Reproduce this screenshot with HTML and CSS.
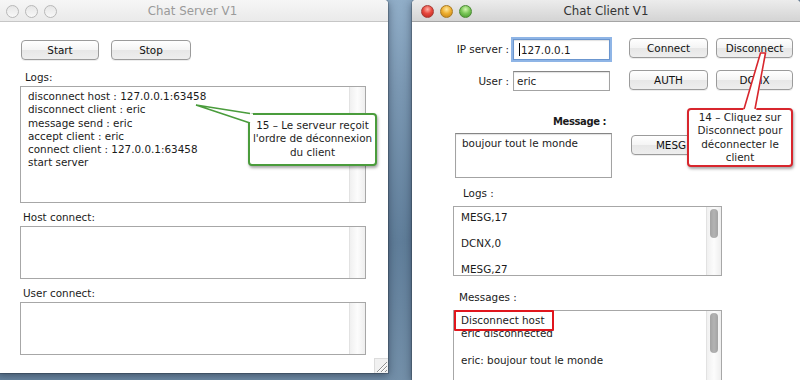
FILE: index.html
```html
<!DOCTYPE html>
<html lang="fr">
<head>
<meta charset="UTF-8">
<meta name="viewport" content="width=device-width, initial-scale=1.0">
<title>Chat Server V1 / Chat Client V1</title>
<link rel="stylesheet" href="styles.css">
</head>
<body>

<div class="window server inactive">
	<div class="titlebar">
		<div class="lights"><span></span><span></span><span></span></div>
		<div class="title">Chat Server V1</div>
	</div>
	<div class="content">
		<div class="buttons">
			<button class="btn start">Start</button>
			<button class="btn stop">Stop</button>
		</div>
		<div class="label first">Logs:</div>
		<div class="scroll logs">
			<div class="text">
				<div>disconnect host : 127.0.0.1:63458</div>
				<div>disconnect client : eric</div>
				<div>message send : eric</div>
				<div>accept client : eric</div>
				<div>connect client : 127.0.0.1:63458</div>
				<div>start server</div>
			</div>
			<div class="track"></div>
		</div>
		<div class="label">Host connect:</div>
		<div class="scroll small">
			<div class="text"></div>
			<div class="track"></div>
		</div>
		<div class="label">User connect:</div>
		<div class="scroll small">
			<div class="text"></div>
			<div class="track"></div>
		</div>
	</div>
	<svg class="grip" width="14" height="15" viewBox="0 0 14 15">
		<rect x="0.5" y="0.5" width="14" height="15" fill="#f1f1f1" stroke="#dcdcdc"/>
		<path d="M3 14 L13 4 M7 14 L13 8 M11 14 L13 12" stroke="#8f8f8f" stroke-width="1"/>
		<path d="M4 14 L13 5 M8 14 L13 9" stroke="#ffffff" stroke-width="1"/>
	</svg>
</div>

<div class="window client">
	<div class="titlebar">
		<div class="lights"><span class="red"></span><span class="yellow"></span><span class="green"></span></div>
		<div class="title">Chat Client V1</div>
	</div>
	<div class="content">
		<div class="connect-form">
			<label>IP server :</label>
			<div class="field focus"><span class="caret"></span>127.0.0.1</div>
			<button class="btn first-btn">Connect</button>
			<button class="btn second-btn">Disconnect</button>
			<label>User :</label>
			<div class="field">eric</div>
			<button class="btn first-btn">AUTH</button>
			<button class="btn second-btn">DCNX</button>
		</div>
		<div class="msg-label">Message :</div>
		<div class="msg-row">
			<div class="msg-area">boujour tout le monde</div>
			<button class="btn mesg">MESG</button>
		</div>
		<div class="label logs-label">Logs :</div>
		<div class="scroll client-logs">
			<div class="text">
				<div>MESG,17</div>
				<div>&nbsp;</div>
				<div>DCNX,0</div>
				<div>&nbsp;</div>
				<div>MESG,27</div>
			</div>
			<div class="track"><div class="thumb"></div></div>
		</div>
		<div class="label messages-label">Messages :</div>
		<div class="scroll client-messages">
			<div class="text">
				<div>Disconnect host</div>
				<div>eric disconnected</div>
				<div>&nbsp;</div>
				<div>eric: boujour tout le monde</div>
			</div>
			<div class="track"><div class="thumb tall"></div></div>
		</div>
	</div>
</div>

<div class="callout green">15 – Le serveur reçoit<br>l'ordre de déconnexion<br>du client</div>
<div class="callout red">14 – Cliquez sur<br>Disconnect pour<br>déconnecter le<br>client</div>
<div class="highlight"></div>

<svg class="tails" width="800" height="380" viewBox="0 0 800 380">
	<polygon points="196,105 253,113.5 253,124" fill="#fff"/>
	<polyline points="250,113.5 196,105 250,123" fill="none" stroke="#4a9c3c" stroke-width="1.6"/>
	<polygon points="760.5,53 765.5,53 756,111 743,111" fill="#fff"/>
	<polyline points="744,109 760.5,53 765.5,53 755,109" fill="none" stroke="#d8262d" stroke-width="1.6"/>
</svg>

</body>
</html>
```

FILE: styles.css
```css
* {
	box-sizing: border-box;
}
body {
	margin: 0;
	width: 800px;
	height: 380px;
	overflow: hidden;
	position: relative;
	font-family: "DejaVu Sans", sans-serif;
	font-size: 10.4px;
	color: #1b1b1b;
	background: linear-gradient(170deg, #a2bfd8 0%, #7b98b3 30%, #5f7d99 60%, #7d98b0 100%);
}

/* windows */
.window {
	position: absolute;
	top: 0;
	background: #fff;
	border-radius: 4px 4px 0 0;
	box-shadow: 0 2px 9px rgba(20, 30, 45, .55), 0 0 0 1px rgba(0, 0, 0, .2);
	overflow: hidden;
}
.server {
	left: -3px;
	width: 391px;
	height: 373px;
}
.client {
	left: 412px;
	width: 388px;
	height: 380px;
}
.titlebar {
	height: 22px;
	display: grid;
	grid-template-columns: 1fr auto 1fr;
	align-items: center;
	border-bottom: 1px solid #a5a5a5;
	background: linear-gradient(#ececec, #d4d4d4);
}
.inactive .titlebar {
	background: linear-gradient(#f6f6f6, #eaeaea);
	border-bottom-color: #c6c6c6;
}
.title {
	font-size: 11.8px;
	color: #333;
	padding-top: 1px;
}
.inactive .title {
	color: #9a9a9a;
}
.lights {
	display: flex;
	gap: 6px;
	padding: 1px 0 0 9px;
}
.lights span {
	width: 13px;
	height: 13px;
	border-radius: 50%;
	border: 1px solid #b8b8b8;
	background: linear-gradient(#e6e6e6, #f8f8f8);
}
.lights .red {
	border-color: #a83a33;
	background: radial-gradient(circle at 50% 30%, #ffb3a8 0%, #e8483e 45%, #b3251d 100%);
}
.lights .yellow {
	border-color: #a97a22;
	background: radial-gradient(circle at 50% 30%, #ffe9a0 0%, #eeb032 45%, #c07d12 100%);
}
.lights .green {
	border-color: #4c8a35;
	background: radial-gradient(circle at 50% 30%, #d4f7b0 0%, #7cc75a 45%, #3f9326 100%);
}

/* controls */
.btn {
	font: inherit;
	color: #111;
	height: 20px;
	padding: 0;
	border: 1px solid #9b9b9b;
	border-radius: 4px;
	background: linear-gradient(#ffffff, #f4f4f4 50%, #e7e7e7 52%, #eeeeee);
	box-shadow: 0 1px 0 rgba(0, 0, 0, .07);
}
.field, .msg-area {
	background: #fff;
	border: 1px solid #a3a3a3;
	border-top-color: #858585;
	box-shadow: inset 0 1px 1px rgba(0, 0, 0, .12);
}
.label {
	line-height: 13px;
}
.scroll {
	display: flex;
	border: 1px solid #a7a7a7;
	background: #fff;
}
.scroll .text {
	flex: 1;
	padding: 3px 7px;
	line-height: 13.3px;
	white-space: nowrap;
	overflow: hidden;
}
.track {
	width: 16px;
	border-left: 1px solid #e2e2e2;
	background: linear-gradient(90deg, #f0f0f0, #fcfcfc 50%, #eeeeee);
}
.thumb {
	height: 29px;
	margin: 2px 3px 0 3px;
	border-radius: 4px;
	background: linear-gradient(90deg, #a3a3a3, #b3b3b3, #a3a3a3);
}
.thumb.tall {
	height: 40px;
}

/* server */
.server .content {
	display: flex;
	flex-direction: column;
	padding-left: 23px;
}
.buttons {
	display: flex;
	gap: 12px;
	margin: 18px 0 0 1px;
}
.start {
	width: 78px;
}
.stop {
	width: 80px;
}
.server .label {
	margin: 8px 0 2px 3px;
}
.server .label.first {
	margin: 11px 0 2px 5px;
}
.server .scroll {
	width: 346px;
}
.server .logs {
	height: 117px;
}
.server .small {
	height: 53px;
}
.grip {
	position: absolute;
	right: 0;
	bottom: 0;
}

/* client */
.connect-form {
	display: grid;
	grid-template-columns: 97px 101px 98px 85px;
	grid-template-rows: 22px 22px;
	row-gap: 10px;
	margin-top: 16px;
	align-items: start;
}
.connect-form label {
	align-self: center;
	text-align: right;
	padding-bottom: 1px;
}
.field {
	margin: 1px 0 0 4px;
	width: 97px;
	height: 20px;
	padding-left: 3px;
	display: flex;
	align-items: center;
}
.field.focus {
	height: 21px;
	margin-top: 1px;
	padding-left: 5px;
	border-color: #6b96cf;
	box-shadow: 0 0 0 2px #8fb5e6, inset 0 1px 1px rgba(0, 0, 0, .12);
}
.caret {
	width: 1px;
	height: 13px;
	background: #000;
	margin-right: 1px;
}
.first-btn {
	margin-left: 19px;
	width: 79px;
}
.second-btn {
	margin-left: 8px;
	width: 77px;
}
.msg-label {
	margin: 23px 0 0 141px;
	line-height: 13px;
	font-size: 10px;
	font-weight: bold;
	letter-spacing: -0.4px;
}
.msg-row {
	display: flex;
	align-items: flex-start;
	gap: 19px;
	margin: 5px 0 0 43px;
}
.msg-area {
	width: 157px;
	height: 45px;
	padding: 3px 6px;
	line-height: 13.3px;
}
.mesg {
	width: 80px;
	margin-top: 2px;
}
.client .scroll {
	margin-left: 41px;
	width: 269px;
}
.client .track {
	width: 15px;
}
.logs-label {
	margin: 9px 0 6px 51px;
}
.client-logs {
	height: 70px;
}
.client-logs .text {
	padding-top: 4px;
	line-height: 13px;
}
.messages-label {
	margin: 15px 0 6px 47px;
}
.client-messages {
	height: 70px;
	border-bottom: 0;
}

/* annotations */
.callout {
	position: absolute;
	background: #fff;
	border: 2px solid;
	border-radius: 4px;
	text-align: center;
	white-space: nowrap;
	line-height: 13.3px;
	color: #1d1d1d;
	box-shadow: 1px 2px 3px rgba(0, 0, 0, .35);
}
.callout.green {
	left: 248px;
	top: 113px;
	width: 129px;
	height: 53px;
	padding-top: 4px;
	border-color: #4a9c3c;
}
.callout.red {
	left: 687px;
	top: 108px;
	width: 106px;
	height: 59px;
	padding-top: 1px;
	border-color: #d8262d;
}
.highlight {
	position: absolute;
	left: 454px;
	top: 310px;
	width: 100px;
	height: 21px;
	border: 2px solid #e0161d;
	border-radius: 1px;
}
.tails {
	position: absolute;
	left: 0;
	top: 0;
	pointer-events: none;
}
```
